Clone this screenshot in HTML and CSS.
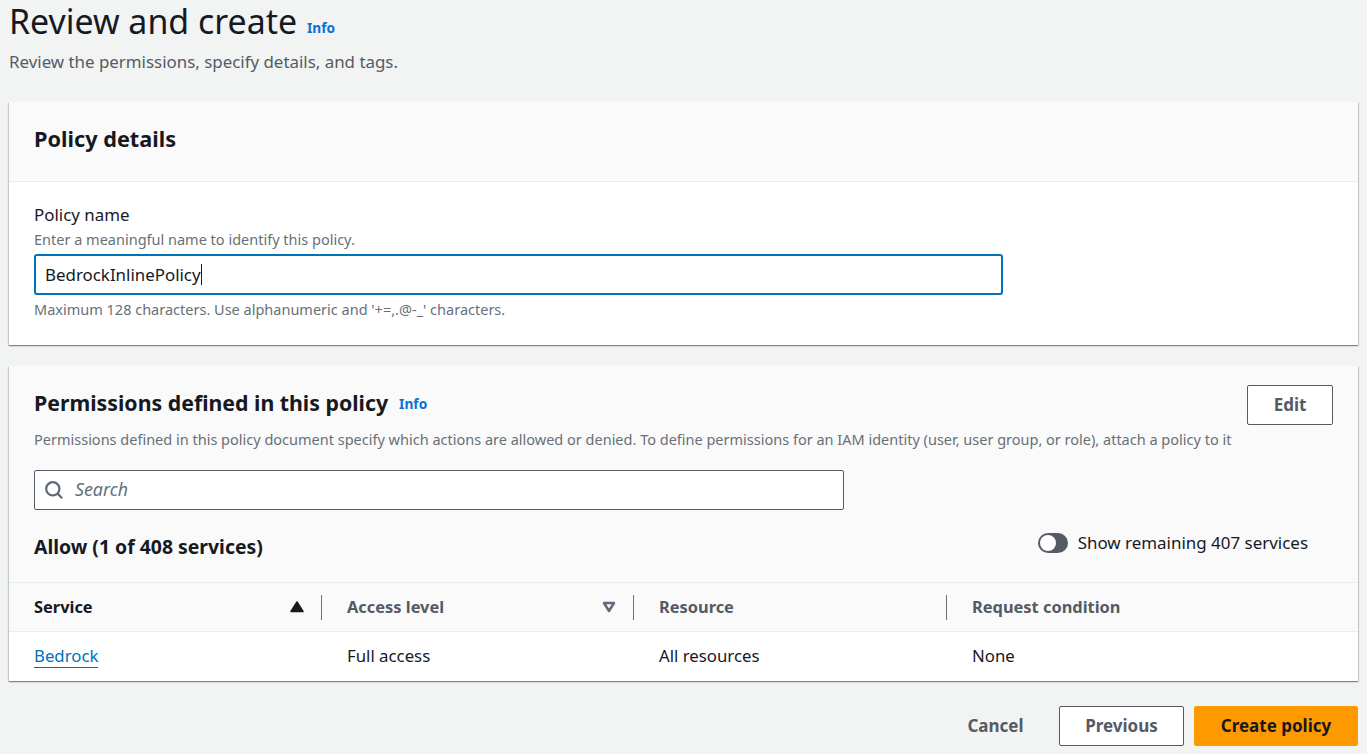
FILE: index.html
```html
<!DOCTYPE html>
<html lang="en">
<head>
<meta charset="utf-8">
<title>Review and create</title>
<link rel="stylesheet" href="styles.css">
</head>
<body>
<main class="page">
  <header class="page-head">
    <div class="title-row"><h1 class="title">Review and create</h1><a class="info info-title">Info</a></div>
    <p class="subtitle">Review the permissions, specify details, and tags.</p>
  </header>

  <section class="card card-details">
    <div class="card-head details-head"><h2 class="card-title title-details">Policy details</h2></div>
    <div class="details-body">
      <div class="field-label">Policy name</div>
      <div class="hint hint-top">Enter a meaningful name to identify this policy.</div>
      <div class="name-input"><span class="name-value">BedrockInlinePolicy</span><span class="caret"></span></div>
      <div class="hint hint-bottom">Maximum 128 characters. Use alphanumeric and '+=,.@-_' characters.</div>
    </div>
  </section>

  <section class="card card-perms">
    <div class="perms-head">
      <div class="perms-top">
        <div class="perms-titles">
          <div class="perms-title-row"><h2 class="card-title">Permissions defined in this policy</h2><a class="info">Info</a></div>
          <p class="hint perms-desc">Permissions defined in this policy document specify which actions are allowed or denied. To define permissions for an IAM identity (user, user group, or role), attach a policy to it</p>
        </div>
        <button class="btn btn-edit">Edit</button>
      </div>
      <div class="search">
        <svg class="search-icon" width="18" height="18" viewBox="0 0 18 18" fill="none" stroke="#5f6b7a" stroke-width="2.200"><circle cx="7.800" cy="7.800" r="6.600"/><path d="M12.600 12.600 17.200 17.200"/></svg>
        <span class="search-text">Search</span>
      </div>
      <div class="allow-row">
        <h3 class="allow-title">Allow (1 of 408 services)</h3>
        <div class="toggle-wrap"><span class="toggle"><span class="knob"></span></span><span class="toggle-label">Show remaining 407 services</span></div>
      </div>
    </div>
    <div class="table">
      <div class="tr th-row">
        <div class="th th-active"><span class="th-text">Service</span>
          <svg class="sort" width="14" height="12" viewBox="0 0 14 12"><path d="M7 1 13 10.500H1Z" fill="#16191f" stroke="#16191f" stroke-width="1.500" stroke-linejoin="round"/></svg>
          <span class="divider"></span></div>
        <div class="th"><span class="th-text">Access level</span>
          <svg class="sort" width="14" height="12" viewBox="0 0 14 12"><path d="M2 2H12L7 10Z" fill="none" stroke="#5f6b7a" stroke-width="2.500" stroke-linejoin="round"/></svg>
          <span class="divider"></span></div>
        <div class="th"><span class="th-text">Resource</span><span class="divider"></span></div>
        <div class="th"><span class="th-text">Request condition</span></div>
      </div>
      <div class="tr td-row">
        <div class="td"><a class="link">Bedrock</a></div>
        <div class="td">Full access</div>
        <div class="td">All resources</div>
        <div class="td">None</div>
      </div>
    </div>
  </section>

  <footer class="actions">
    <button class="btn btn-plain">Cancel</button>
    <button class="btn btn-prev">Previous</button>
    <button class="btn btn-primary">Create policy</button>
  </footer>
</main>
</body>
</html>
```

FILE: styles.css
```css
* { box-sizing: border-box; }
html, body { margin: 0; padding: 0; height: 754px; overflow: hidden; }
body { background: #f2f3f3; color: #16191f; font-family: "Noto Sans", "Open Sans", sans-serif; font-size: 16.8px; }
.page { padding: 0 9px; }
.page-head { height: 102px; }
.title-row { display: flex; align-items: flex-end; gap: 10px; height: 43px; }
.title { margin: 0; font-size: 33.9px; font-weight: 400; line-height: 43px; white-space: nowrap; }
.info { color: #0972d3; font-size: 13.7px; font-weight: 700; }
.info-title { line-height: 16px; margin-bottom: 7px; }
.subtitle { margin: 8px 0 0; font-size: 16.9px; line-height: 22px; color: #545b64; }
.card { background: #fff; box-shadow: 0 1px 1px 0 rgba(0,28,36,.3), 1px 1px 1px 0 rgba(0,28,36,.15), -1px 1px 1px 0 rgba(0,28,36,.15); }
.card-details { height: 243px; }
.details-head { height: 80px; background: #fafafa; border-bottom: 1px solid #eaeded; padding: 23px 25px 0; }
.card-title { margin: 0; font-size: 21.3px; line-height: 28px; font-weight: 700; white-space: nowrap; }
.title-details { font-size: 21.7px; }
.details-body { padding: 22px 25px 0; }
.field-label { font-size: 16.9px; line-height: 22px; }
.hint { font-size: 14.5px; line-height: 20px; color: #687078; }
.hint-top { margin-top: 3px; }
.name-input { display: flex; align-items: center; width: 969px; height: 41px; margin-top: 5px; padding-left: 9px; background: #fff; border: 2px solid #0073bb; border-radius: 3px; font-size: 16.9px; }
.name-value { white-space: nowrap; }
.caret { width: 1px; height: 21px; background: #16191f; }
.hint-bottom { margin-top: 4px; }
.card-perms { margin-top: 21px; height: 315px; }
.perms-head { height: 217px; background: #fafafa; padding: 0 25px; border-bottom: 1px solid #eaeded; }
.perms-top { display: flex; justify-content: space-between; padding-top: 19px; height: 104px; }
.perms-title-row { display: flex; align-items: center; gap: 11px; height: 36px; }
.perms-desc { margin: 8px 0 0; white-space: nowrap; }
.btn { font-family: inherit; font-size: 17px; font-weight: 700; border-radius: 2px; cursor: pointer; padding: 0 0 2px; }
.btn-edit { width: 86px; height: 40px; background: #fff; border: 1px solid #545b64; color: #545b64; }
.search { display: flex; align-items: center; gap: 11px; width: 810px; height: 40px; padding-left: 10px; background: #fff; border: 1px solid #545b64; border-radius: 2px; }
.search-text { font-style: italic; color: #687078; font-size: 17.8px; line-height: 22px; padding: 0 0 2px 1px; }
.allow-row { display: flex; justify-content: space-between; align-items: center; height: 73px; padding-right: 25px; }
.allow-title { margin: 0; font-size: 19.4px; line-height: 24px; font-weight: 700; }
.toggle-wrap { display: flex; align-items: center; gap: 10px; margin-top: -8px; font-size: 16.95px; }
.toggle { display: flex; align-items: center; width: 30px; height: 20px; padding-left: 2px; border-radius: 10px; background: #545b64; }
.knob { width: 16px; height: 16px; border-radius: 50%; background: #fff; }
.tr { display: grid; grid-template-columns: 313px 312px 313px 1fr; }
.th-row { height: 49px; background: #fafafa; border-bottom: 1px solid #eaeded; }
.th { position: relative; display: flex; align-items: center; justify-content: space-between; padding: 0 18px 0 25px; font-weight: 700; color: #545b64; font-size: 16.4px; }
.th-text { padding-bottom: 2px; }
.th-active { color: #16191f; }
.divider { position: absolute; right: 0; top: 12px; width: 1px; height: 25px; background: #687078; }
.td-row { height: 49px; align-items: center; padding-bottom: 3px; }
.td { padding-left: 25px; }
.link { color: #0073bb; border-bottom: 1px solid #0073bb; }
.actions { display: flex; justify-content: flex-end; align-items: center; margin-top: 25px; gap: 10px; }
.btn-plain { width: 107px; height: 40px; background: none; border: 0; color: #545b64; margin-right: 0; }
.btn-prev { width: 125px; height: 40px; background: #fff; border: 1px solid #545b64; color: #545b64; }
.btn-primary { width: 164px; height: 40px; background: #ff9900; border: 1px solid #ff9900; color: #16191f; }
```
